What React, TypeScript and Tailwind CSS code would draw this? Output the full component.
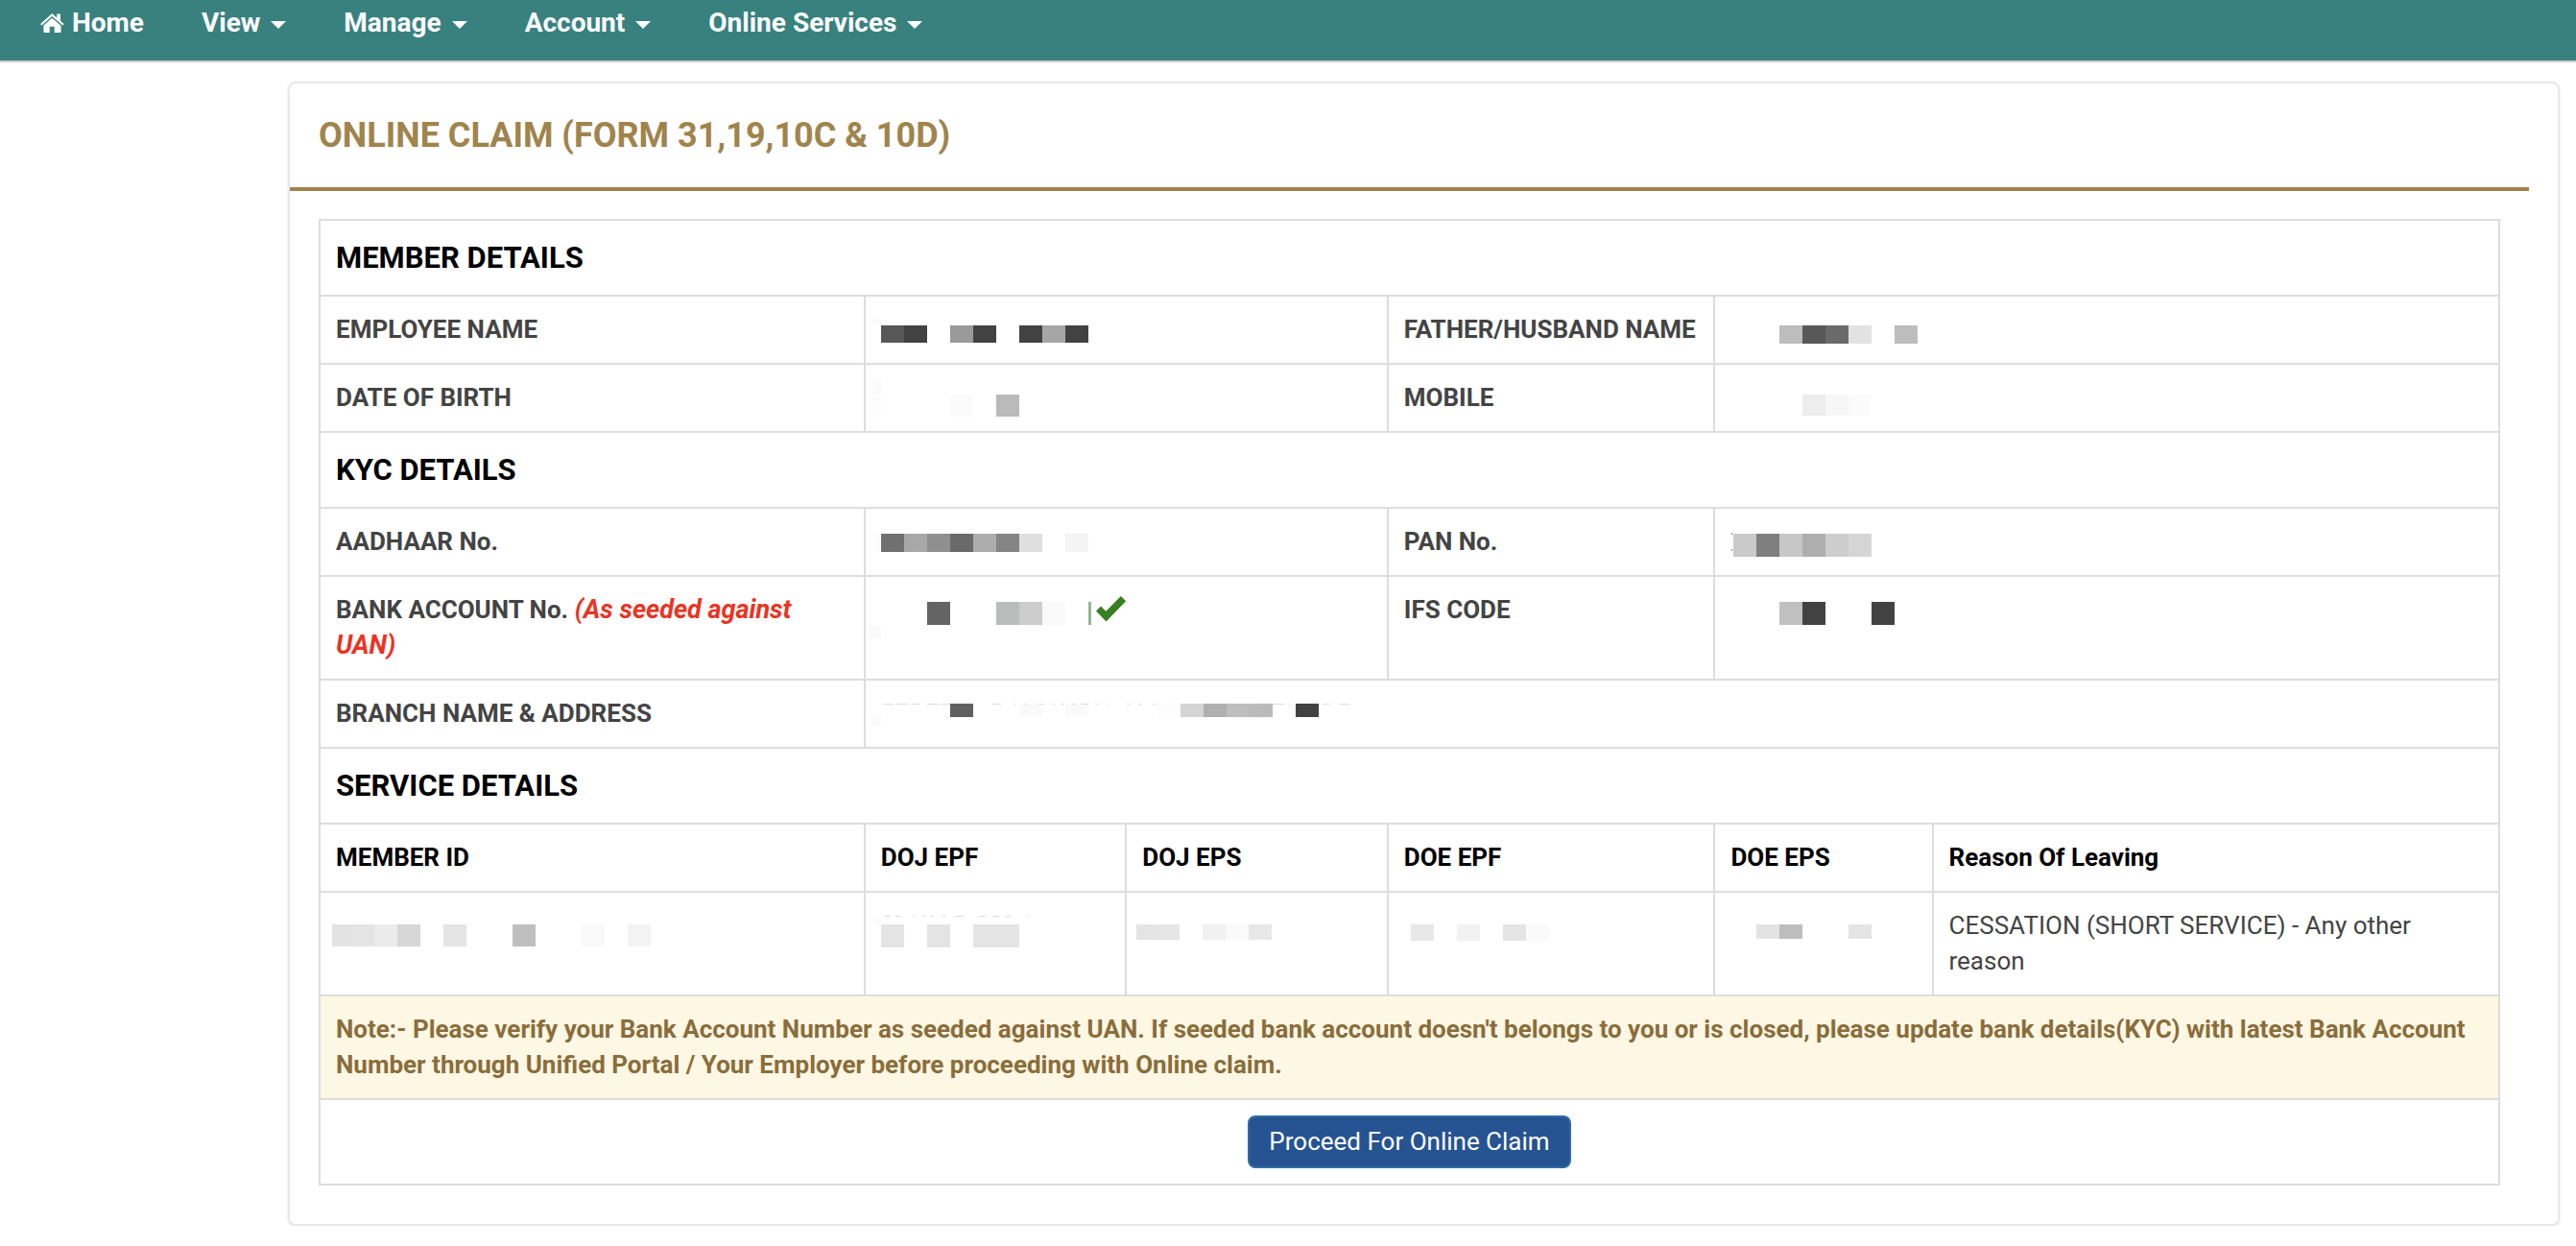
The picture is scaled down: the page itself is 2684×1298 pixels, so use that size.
import type { ReactNode } from "react";

type Block = [x: number, y: number, w: number, h: number, color: string];

/* Pixelated cover over a private value; coordinates start at the cell's content corner. */
function Masked({ blocks, dashes = [], dashY = 8, children }: { blocks: Block[]; dashes?: [number, number][]; dashY?: number; children?: ReactNode }) {
  return (
    <svg className="block h-9 w-full overflow-visible" role="img" aria-label="Hidden value" shapeRendering="crispEdges">
      {blocks.map(([x, y, w, h, color], i) => (
        <rect key={i} x={x} y={y} width={w} height={h} fill={color} />
      ))}
      {dashes.map(([x, w], i) => (
        <rect key={i} x={x} y={dashY} width={w} height={1} fill="#dedede" />
      ))}
      {children}
    </svg>
  );
}

function Caret() {
  return <span className="ml-[11px] inline-block border-x-8 border-t-8 border-x-transparent border-t-white align-middle" />;
}

function HomeIcon() {
  return (
    <svg viewBox="0 0 25 20" className="h-5 w-[25px] fill-white" aria-hidden="true">
      <path d="M12.300 0L17.300 4.400V.6H21V7.800L24.700 11.100L23.300 12.600L12.300 2.900L1.400 12.600L0 11.100Z" />
      <path d="M12.300 4.700L21.500 12.800V19.200Q21.500 20 20.700 20H14.700V13.800H9.700V20H4.200Q3.400 20 3.400 19.200V12.600Z" />
    </svg>
  );
}

const labelCell = "px-4 py-4 text-left align-top font-bold text-[#444444] border-2 border-[#dddddd]";
const headCell = "px-4 py-4 text-left align-top font-bold text-black border-2 border-[#dddddd]";
const cell = "px-4 py-4 text-left align-top border-2 border-[#dddddd]";

function SectionRow({ children }: { children: ReactNode }) {
  return (
    <tr>
      <th colSpan={6} scope="colgroup" className="border-2 border-[#dddddd] px-4 py-5 text-left text-[31px] leading-[37px] font-bold text-black">
        {children}
      </th>
    </tr>
  );
}

export default function App() {
  const menus = ["View", "Manage", "Account", "Online Services"];
  return (
    <div className="bg-white font-[Roboto,sans-serif] text-[26px] leading-[37px] text-[#444444]">
      <nav className="flex h-[65px] items-start border-b-2 border-[#cccccc] bg-[#38817f] px-[42px] pt-1 text-[28px] leading-10 font-bold text-white">
        <a href="#home" className="mr-[60px] flex items-center gap-2">
          <HomeIcon />
          Home
        </a>
        {menus.map((m) => (
          <button key={m} type="button" className="mr-[60px]">
            {m}
            <Caret />
          </button>
        ))}
      </nav>

      <main className="mt-5 mr-[17px] ml-[300px] rounded-lg border-2 border-[#e8e8e8] pr-[30px] pb-10 shadow-sm">
        <h1 className="border-b-4 border-[#a0844c] py-8 pl-[30px] text-[36px] leading-[44px] font-bold text-[#a0844c]">
          ONLINE CLAIM (FORM 31,19,10C &amp; 10D)
        </h1>
        <div className="px-[30px] pt-[29px]">
          <table className="w-full table-fixed border-collapse">
            <colgroup>
              <col className="w-[25%]" />
              <col className="w-[12%]" />
              <col className="w-[12%]" />
              <col className="w-[15%]" />
              <col className="w-[10%]" />
              <col className="w-[26%]" />
            </colgroup>
            <tbody>
              <SectionRow>MEMBER DETAILS</SectionRow>
              <tr>
                <th scope="row" className={labelCell}>EMPLOYEE NAME</th>
                <td colSpan={2} className={cell}>
                  <Masked
                    blocks={[
                      [-9, 6, 9, 8, "#fafafa"],
                      [0, 14, 24, 18, "#575757"],
                      [24, 14, 24, 18, "#424242"],
                      [72, 14, 24, 18, "#999999"],
                      [96, 14, 24, 18, "#424242"],
                      [144, 14, 24, 18, "#424242"],
                      [168, 14, 24, 18, "#a6a6a6"],
                      [192, 14, 24, 18, "#424242"],
                    ]}
                  />
                </td>
                <th scope="row" className={labelCell}>FATHER/HUSBAND NAME</th>
                <td colSpan={2} className={cell}>
                  <Masked
                    blocks={[
                      [51, 14, 24, 19, "#bdbdbd"],
                      [75, 14, 24, 19, "#585858"],
                      [99, 14, 24, 19, "#6a6a6a"],
                      [123, 14, 24, 19, "#e2e2e2"],
                      [171, 14, 24, 19, "#bdbdbd"],
                    ]}
                  />
                </td>
              </tr>
              <tr>
                <th scope="row" className={labelCell}>DATE OF BIRTH</th>
                <td colSpan={2} className={cell}>
                  <Masked
                    blocks={[
                      [-9, 1, 9, 14, "#fafafa"],
                      [-9, 15, 9, 23, "#fcfcfc"],
                      [72, 15, 24, 23, "#fbfbfb"],
                      [120, 15, 24, 23, "#bababa"],
                    ]}
                  />
                </td>
                <th scope="row" className={labelCell}>MOBILE</th>
                <td colSpan={2} className={cell}>
                  <Masked
                    blocks={[
                      [75, 15, 24, 22, "#ededed"],
                      [99, 15, 24, 22, "#f7f7f7"],
                      [123, 15, 24, 22, "#fbfbfb"],
                    ]}
                  />
                </td>
              </tr>

              <SectionRow>KYC DETAILS</SectionRow>
              <tr>
                <th scope="row" className={labelCell}>AADHAAR No.</th>
                <td colSpan={2} className={cell}>
                  <Masked
                    blocks={[
                      [-6, 10, 6, 19, "#fcfcfc"],
                      [0, 10, 24, 19, "#707070"],
                      [24, 10, 24, 19, "#a8a8a8"],
                      [48, 10, 24, 19, "#8f8f8f"],
                      [72, 10, 24, 19, "#6a6a6a"],
                      [96, 10, 24, 19, "#adadad"],
                      [120, 10, 24, 19, "#858585"],
                      [144, 10, 24, 19, "#dfdfdf"],
                      [192, 10, 24, 19, "#f4f4f4"],
                    ]}
                  />
                </td>
                <th scope="row" className={labelCell}>PAN No.</th>
                <td colSpan={2} className={cell}>
                  <Masked
                    blocks={[
                      [1, 9, 1, 2, "#888888"],
                      [1, 26, 1, 2, "#888888"],
                      [3, 10, 24, 24, "#cacaca"],
                      [27, 10, 24, 24, "#7f7f7f"],
                      [51, 10, 24, 24, "#c7c7c7"],
                      [75, 10, 24, 24, "#aeaeae"],
                      [99, 10, 24, 24, "#cdcdcd"],
                      [123, 10, 24, 24, "#d5d5d5"],
                    ]}
                  />
                </td>
              </tr>
              <tr>
                <th scope="row" className={labelCell}>
                  BANK ACCOUNT No. <em className="text-[27px] text-[#ea3323]">(As seeded against UAN)</em>
                </th>
                <td colSpan={2} className={cell}>
                  <Masked
                    blocks={[
                      [-13, 34, 13, 15, "#fafafa"],
                      [48, 10, 24, 24, "#646464"],
                      [120, 10, 24, 24, "#bbbcbc"],
                      [144, 10, 24, 24, "#cdcdcd"],
                      [168, 10, 24, 24, "#fafafa"],
                      [216, 10, 3, 24, "#93b592"],
                    ]}
                  >
                    <path d="M224 19.500l5-5 5.300 5.300 15.600-15.800 5.200 5.200-20.600 21.200z" fill="#37801f" shapeRendering="auto" />
                  </Masked>
                </td>
                <th scope="row" className={labelCell}>IFS CODE</th>
                <td colSpan={2} className={cell}>
                  <Masked
                    blocks={[
                      [51, 10, 24, 24, "#c0c0c0"],
                      [75, 10, 24, 24, "#424242"],
                      [147, 10, 24, 24, "#424242"],
                    ]}
                  />
                </td>
              </tr>
              <tr>
                <th scope="row" className={labelCell}>BRANCH NAME &amp; ADDRESS</th>
                <td colSpan={5} className={cell}>
                  <Masked
                    blocks={[
                      [-10, 22, 10, 9, "#fafafa"],
                      [72, 8, 24, 14, "#606060"],
                      [144, 8, 24, 14, "#fafafa"],
                      [192, 8, 24, 14, "#fafafa"],
                      [288, 8, 24, 14, "#fdfdfd"],
                      [312, 8, 24, 14, "#d4d4d4"],
                      [336, 8, 24, 14, "#b0b0b0"],
                      [360, 8, 24, 14, "#bebebe"],
                      [384, 8, 24, 14, "#bbbbbb"],
                      [432, 8, 24, 14, "#424242"],
                    ]}
                    dashes={[
                      [2, 12], [16, 12], [31, 9], [48, 12], [62, 10], [116, 9], [138, 2], [150, 3], [161, 3], [166, 4], [178, 3],
                      [188, 3], [199, 4], [208, 8], [223, 3], [237, 2], [256, 3], [268, 4], [283, 4], [303, 2], [408, 13], [424, 2],
                      [460, 8], [477, 12],
                    ]}
                  />
                </td>
              </tr>

              <SectionRow>SERVICE DETAILS</SectionRow>
              <tr>
                <th scope="col" className={headCell}>MEMBER ID</th>
                <th scope="col" className={headCell}>DOJ EPF</th>
                <th scope="col" className={headCell}>DOJ EPS</th>
                <th scope="col" className={headCell}>DOE EPF</th>
                <th scope="col" className={headCell}>DOE EPS</th>
                <th scope="col" className={headCell}>Reason Of Leaving</th>
              </tr>
              <tr>
                <td className={cell}>
                  <Masked
                    blocks={[
                      [-4, 17, 22, 23, "#e3e3e3"],
                      [18, 17, 22, 23, "#e4e4e4"],
                      [40, 17, 24, 23, "#ebebeb"],
                      [64, 17, 24, 23, "#d7d7d7"],
                      [112, 17, 24, 23, "#e4e4e4"],
                      [184, 17, 24, 23, "#bfbfbf"],
                      [256, 17, 24, 23, "#f9f9f9"],
                      [304, 17, 24, 23, "#f3f3f3"],
                    ]}
                  />
                </td>
                <td className={cell}>
                  <Masked
                    blocks={[
                      [-7, 9, 7, 8, "#fafafa"],
                      [0, 17, 24, 24, "#e4e4e4"],
                      [48, 17, 24, 24, "#e4e4e4"],
                      [96, 17, 48, 24, "#e4e4e4"],
                    ]}
                    dashes={[[4, 6], [15, 5], [33, 2], [43, 3], [51, 4], [64, 3], [77, 9], [102, 7], [117, 6], [130, 5], [151, 2]]}
                  />
                </td>
                <td className={cell}>
                  <Masked
                    blocks={[
                      [-6, 17, 21, 16, "#e4e4e4"],
                      [15, 17, 24, 16, "#e6e6e6"],
                      [63, 17, 24, 16, "#f1f1f1"],
                      [87, 17, 24, 16, "#fafafa"],
                      [111, 17, 24, 16, "#e7e7e7"],
                    ]}
                  />
                </td>
                <td className={cell}>
                  <Masked
                    blocks={[
                      [7, 17, 24, 17, "#e8e8e8"],
                      [55, 17, 24, 17, "#f2f2f2"],
                      [103, 17, 24, 17, "#e4e4e4"],
                      [127, 17, 24, 17, "#fafafa"],
                    ]}
                  />
                </td>
                <td className={cell}>
                  <Masked
                    blocks={[
                      [27, 17, 24, 15, "#e3e3e3"],
                      [51, 17, 24, 15, "#bdbdbd"],
                      [123, 17, 24, 15, "#e4e4e4"],
                    ]}
                  />
                </td>
                <td className={cell}>CESSATION (SHORT SERVICE) - Any other reason</td>
              </tr>
              <tr>
                <td colSpan={6} className="border-2 border-[#dddddd] bg-[#fdf7e4] px-4 py-4 font-bold text-[#8a6d3b]">
                  Note:- Please verify your Bank Account Number as seeded against UAN. If seeded bank account doesn't belongs to you or is closed, please update bank details(KYC) with latest Bank Account Number through Unified Portal / Your Employer before proceeding with Online claim.
                </td>
              </tr>
              <tr>
                <td colSpan={6} className="border-2 border-[#dddddd] p-4 text-center">
                  <button type="button" className="mx-auto block h-[55px] rounded-lg border-2 border-[#2e6da4] bg-[#265391] px-5 text-white">
                    Proceed For Online Claim
                  </button>
                </td>
              </tr>
            </tbody>
          </table>
        </div>
      </main>
    </div>
  );
}
